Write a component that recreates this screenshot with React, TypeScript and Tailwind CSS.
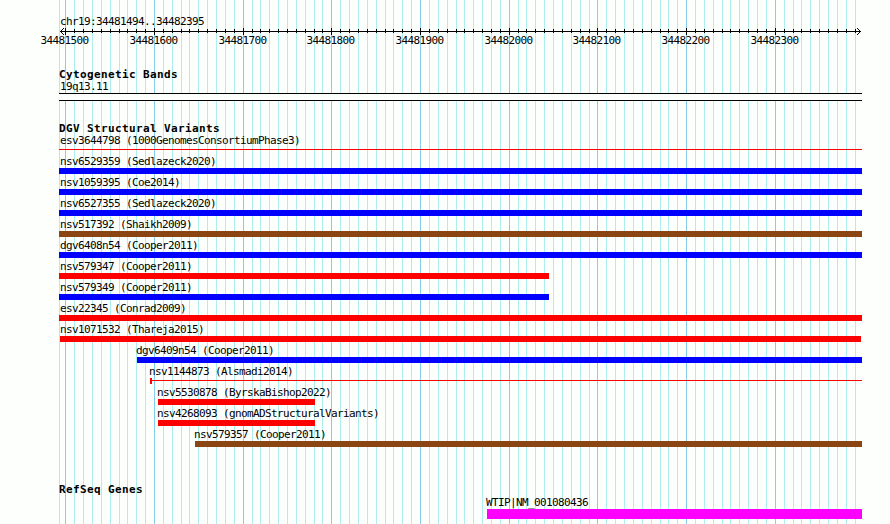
import React from 'react';

type Track = {
  name: string;
  left: number;
  right: number;
  color: string;
  shape?: 'bar' | 'stub';
};

const BLUE = 'bg-[#0000ff]';
const RED = 'bg-[#ff0000]';
const BROWN = 'bg-[#8b4513]';

// left / right are pixel columns of the rendered panel
const variants: Track[] = [
  { name: 'nsv6529359 (Sedlazeck2020)', left: 59, right: 862, color: BLUE },
  { name: 'nsv1059395 (Coe2014)', left: 59, right: 862, color: BLUE },
  { name: 'nsv6527355 (Sedlazeck2020)', left: 59, right: 862, color: BLUE },
  { name: 'nsv517392 (Shaikh2009)', left: 59, right: 862, color: BROWN },
  { name: 'dgv6408n54 (Cooper2011)', left: 59, right: 862, color: BLUE },
  { name: 'nsv579347 (Cooper2011)', left: 59, right: 549, color: RED },
  { name: 'nsv579349 (Cooper2011)', left: 59, right: 549, color: BLUE },
  { name: 'esv22345 (Conrad2009)', left: 59, right: 862, color: RED },
  { name: 'nsv1071532 (Thareja2015)', left: 60, right: 861, color: RED },
  { name: 'dgv6409n54 (Cooper2011)', left: 137, right: 862, color: BLUE },
  { name: 'nsv1144873 (Alsmadi2014)', left: 150, right: 862, color: RED, shape: 'stub' },
  { name: 'nsv5530878 (ByrskaBishop2022)', left: 158, right: 315, color: RED },
  { name: 'nsv4268093 (gnomADStructuralVariants)', left: 158, right: 315, color: RED },
  { name: 'nsv579357 (Cooper2011)', left: 195, right: 862, color: BROWN },
];

// one grid line every 10 bases, a major one every 100
const ticks = Array.from({ length: 90 }, (_, i) => ({
  x: Math.floor(65.79 + i * 8.869),
  major: i % 10 === 0,
  label: String(34481500 + i * 10),
}));

const labelFont = "font-['DejaVu_Sans_Mono',monospace] text-[11px] tracking-[-0.62px] whitespace-pre";
const titleFont = "font-['DejaVu_Sans_Mono',monospace] text-[11px] font-bold tracking-[0.38px] whitespace-pre";

const Grid: React.FC = () => (
  <svg className="absolute inset-0" width="890" height="524" shapeRendering="crispEdges">
    <rect x="59" y="0" width="1" height="524" fill="#afeeee" />
    {ticks.map((t) => (
      <rect key={t.x} x={t.x} y="0" width="1" height="524" fill={t.major ? '#87ceeb' : '#afeeee'} />
    ))}
  </svg>
);

const Ruler: React.FC = () => (
  <div className="relative h-[36px]">
    <svg className="block" width="890" height="9" shapeRendering="crispEdges">
      <rect x="60" y="4" width="801" height="1" />
      {ticks.map((t) => (
        <rect key={t.x} x={t.x} y={t.major ? 1 : 2} width="1" height={t.major ? 7 : 4} />
      ))}
      <path d="M61 3h1v1h-1zM62 2h1v1h-1zM63 1h1v1h-1zM61 5h1v1h-1zM62 6h1v1h-1zM63 7h1v1h-1z" />
      <path d="M859 3h1v1h-1zM858 2h1v1h-1zM857 1h1v1h-1zM859 5h1v1h-1zM858 6h1v1h-1zM857 7h1v1h-1z" />
    </svg>
    {ticks.filter((t) => t.major).map((t) => (
      <span key={t.label} className={`absolute top-[7px] leading-[13px] ${labelFont}`} style={{ left: t.x - 24.5 }}>
        {t.label}
      </span>
    ))}
  </div>
);

const TrackRow: React.FC<{ track: Track }> = ({ track }) => {
  const { name, left, right, color, shape } = track;
  const nudge = left === 59 ? 'ml-px' : left === 60 ? '' : '-ml-px';
  return (
    <div className="h-[21px]" style={{ marginLeft: left }}>
      <div className={`h-[13px] leading-[13px] ${labelFont} ${nudge}`}>{name}</div>
      {shape === 'stub' ? (
        <div className="flex h-[6px]" style={{ width: right - left }}>
          <div className={`w-[2px] h-[6px] ${color}`} />
          <div className={`mt-[2px] h-px flex-1 ${color}`} />
        </div>
      ) : (
        <div className={`h-[6px] ${color}`} style={{ width: right - left }} />
      )}
    </div>
  );
};

const App: React.FC = () => {
  return (
    <div className="relative w-[890px] h-[524px] overflow-hidden bg-[#fdfffc] text-black">
      <Grid />

      <div className="relative flex flex-col">
        <div className={`h-[27px] pt-[15px] pl-[60px] leading-[13px] ${labelFont}`}>chr19:34481494..34482395</div>
        <Ruler />

        <section className="h-[59px] pt-[5px] pl-[59px]">
          <h2 className={`h-[12px] leading-[13px] ${titleFont}`}>Cytogenetic Bands</h2>
          <div className={`h-[13px] leading-[13px] pl-px ${labelFont}`}>19q13.11</div>
          <div className="w-[803px] h-[8px] border-y border-black bg-[#fdfffc]" />
        </section>

        <section className="h-[361px]">
          <h2 className={`h-[12px] leading-[13px] pl-[59px] ${titleFont}`}>DGV Structural Variants</h2>
          <div className={`h-[15px] leading-[13px] pl-[60px] ${labelFont}`}>esv3644798 (1000GenomesConsortiumPhase3)</div>
          <div className="ml-[59px] mb-[5px] w-[803px] h-px bg-[#ff0000]" />
          {variants.map((v) => (
            <TrackRow key={v.name} track={v} />
          ))}
        </section>

        <section>
          <h2 className={`h-[13px] leading-[13px] pl-[59px] ${titleFont}`}>RefSeq Genes</h2>
          <div className={`h-[13px] leading-[13px] pl-[486px] ${labelFont}`}>WTIP|NM_001080436</div>
          <div className="ml-[487px] w-[375px] h-[10px] bg-[#ff00ff]" />
        </section>
      </div>
    </div>
  );
};

export default App;
